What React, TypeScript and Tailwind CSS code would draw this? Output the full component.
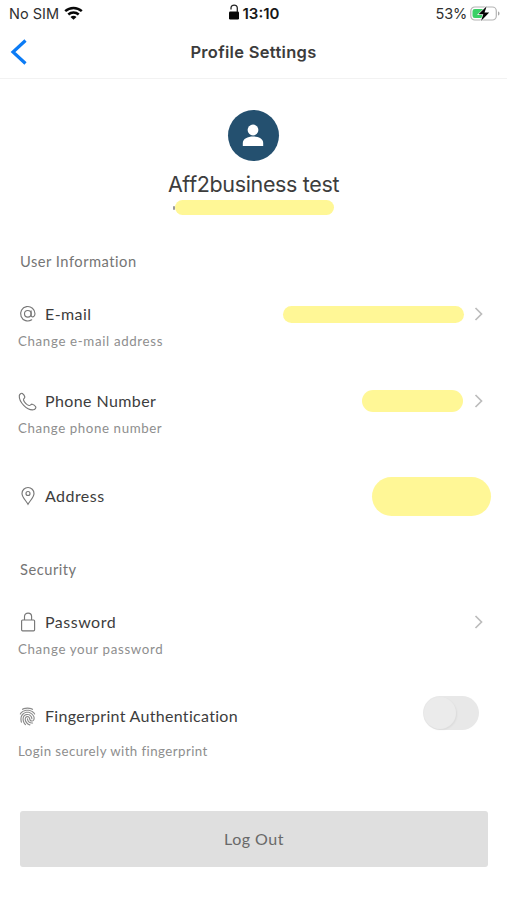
import type { ReactNode } from "react";
import { IoFingerPrint } from "react-icons/io5";

function Wifi() {
  return (
    <svg width="19" height="15" viewBox="0 0 19 15" fill="none" stroke="#080808" strokeWidth="2.5">
      <path d="M1.200 5.200C5.900.9 13.100.9 17.800 5.200" />
      <path d="M4.300 8.500c3-2.700 7.400-2.700 10.400 0" />
      <path d="M9.500 13.800 6.500 10.900c1.700-1.500 4.300-1.500 6 0z" fill="#080808" stroke="none" />
    </svg>
  );
}

function Unlocked() {
  return (
    <svg width="12" height="16" viewBox="0 0 12 16" fill="none">
      <rect x="1" y="7.500" width="10" height="8" rx="1.200" fill="#080808" />
      <path d="M3 5.500V4C3 .2 9.300.2 9.300 4V8" stroke="#222" strokeWidth="1.300" />
    </svg>
  );
}

function Battery() {
  return (
    <svg width="31" height="17" viewBox="0 0 31 17" fill="none">
      <rect x=".8" y="2" width="25.500" height="13" rx="4" stroke="#b4b4b4" strokeWidth="1.200" />
      <path d="M4.800 4H13v9H4.800A2.300 2.300 0 0 1 2.500 10.700V6.300A2.300 2.300 0 0 1 4.800 4z" fill="#39d066" />
      <path d="M28 6.500v4c2-.5 2-3.500 0-4z" fill="#a8a8a8" />
      <path d="M16.700 1.200 8.500 9.300h4.800l-2.300 6.600 8.200-8.500h-4.700z" fill="#050505" stroke="#fff" strokeWidth="1.200" paintOrder="stroke" />
    </svg>
  );
}

function At() {
  return (
    <svg width="18" height="18" viewBox="0 0 18 18" fill="none" stroke="#777" strokeWidth="1.150" strokeLinecap="round">
      <circle cx="8.800" cy="8.800" r="3.300" />
      <path d="M12.100 5.800v4.500c0 2.500 3.900 2.200 3.900-1.500a7.200 7.200 0 1 0-3.300 6" />
    </svg>
  );
}

function Phone() {
  return (
    <svg width="19" height="19" viewBox="0 0 19 19" fill="none" stroke="#777" strokeWidth="1.150" strokeLinejoin="round">
      <path d="M1.300 3.600C1.600 2 3.300.8 4.400 1.400c1.200.8 2.200 2.300 2.400 3.500.2 1.200-1.500 1.800-1.300 3 .4 2 3.500 5.200 5.600 5.600 1.300.2 1.800-1.500 3.100-1.300 1.300.3 2.800 1.400 3.500 2.500.7 1.200-.8 2.800-2.400 3.100C8.900 18.500.8 9.900 1.300 3.600z" />
    </svg>
  );
}

function Pin() {
  return (
    <svg width="18" height="20" viewBox="0 0 18 20" fill="none" stroke="#777" strokeWidth="1.150">
      <path d="M9 18.300C7.300 15 3 11.300 3 7.500a6 6 0 0 1 12 0C15 11.300 10.700 15 9 18.300z" />
      <circle cx="9" cy="7.500" r="2" />
    </svg>
  );
}

function Lock() {
  return (
    <svg width="18" height="20" viewBox="0 0 18 20" fill="none" stroke="#777" strokeWidth="1.150">
      <rect x="2.600" y="8" width="13" height="10.800" rx="1" />
      <path d="M5.500 8V4.600c0-4.700 7.100-4.700 7.100 0V8" />
    </svg>
  );
}

function Chevron() {
  return (
    <svg width="10" height="16" viewBox="0 0 10 16" fill="none" stroke="#bcbcbc" strokeWidth="1.700">
      <path d="m1.500 2 6 6-6 6" />
    </svg>
  );
}

function Row({ icon, label, tracking, children }: { icon: ReactNode; label: string; tracking: string; children?: ReactNode }) {
  return (
    <div className="flex h-10 items-center pl-[18px]">
      <span className="flex w-[19px] justify-center text-[#8a8a8a]">{icon}</span>
      <span className={`ml-2 text-base text-[#3d3d3d] ${tracking}`}>{label}</span>
      <div className="ml-auto flex items-center">{children}</div>
    </div>
  );
}

function Caption({ children, tracking }: { children: string; tracking: string }) {
  return <p className={`pl-[18px] text-[13.300px] leading-5 text-[#8e8e8e] ${tracking}`}>{children}</p>;
}

export default function App() {
  return (
    <div className="h-[900px] w-[507px] overflow-hidden bg-white font-[Lato,sans-serif]">
      <header className="h-[79px] border-b border-[#f2f2f2] font-[Inter,sans-serif]">
        <div className="grid h-7 grid-cols-3 items-center text-[15px] text-[#303030]">
          <div className="flex items-center pl-[9px]">
            <span className="text-[14.500px]">No SIM</span>
            <span className="-mt-[2px] ml-[5px]"><Wifi /></span>
          </div>
          <div className="flex items-center justify-center gap-[3px] font-semibold text-[#181818]">
            <span className="-mt-[5px]"><Unlocked /></span>
            <span className="text-[15px]">13:10</span>
          </div>
          <div className="flex items-center justify-end gap-[3px] pr-[6px]">
            <span className="text-[14.500px] tracking-[-0.200px]">53%</span>
            <span className="-mt-[2px]"><Battery /></span>
          </div>
        </div>
        <div className="-mt-px grid h-[50px] grid-cols-[40px_1fr_40px] items-center">
          <svg className="ml-[10px]" width="18" height="28" viewBox="0 0 18 28" fill="none" stroke="#0b7bf5" strokeWidth="3.200">
            <path d="M15.500 2.500 3 14l12.500 11.500" />
          </svg>
          <h1 className="text-center text-[16.500px] font-semibold tracking-[0.300px] text-[#3c3c3c]">Profile Settings</h1>
        </div>
      </header>

      <section className="flex h-[162px] flex-col items-center pt-[31px]">
        <div className="flex size-[51px] items-center justify-center rounded-full bg-[#24506f]">
          <svg className="-mt-px -ml-px" width="22" height="24" viewBox="0 0 22 24" fill="#fff">
            <circle cx="11" cy="7" r="5.400" />
            <path d="M.8 23v-3c0-4.300 5-6.500 10.200-6.500s10.200 2.200 10.200 6.500v3z" />
          </svg>
        </div>
        <h2 className="mt-[9px] text-[21.500px] leading-[28px] tracking-[-0.350px] text-[#3d3d3d] font-[Inter,sans-serif]">Aff2business test</h2>
        <div className="mt-[2px] flex items-center">
          <span className="h-1 w-[2px] rounded-full bg-[#999]" />
          <span className="h-[15px] w-[159px] rounded-full bg-[#fff796]" />
        </div>
      </section>

      <section className="pt-[10px]">
        <h3 className="pl-[20px] text-[14.700px] leading-5 tracking-[0.500px] text-[#757575]">User Information</h3>
        <div className="mt-[23px]">
          <Row icon={<At />} label="E-mail" tracking="tracking-[0.4px]">
            <span className="mr-[10px] h-[17px] w-[181px] rounded-full bg-[#fff796]" />
            <span className="mr-[23px]"><Chevron /></span>
          </Row>
          <div className="-mt-[3px]"><Caption tracking="tracking-[0.65px]">Change e-mail address</Caption></div>
        </div>
        <div className="mt-[30px]">
          <Row icon={<Phone />} label="Phone Number" tracking="tracking-[0.4px]">
            <span className="mr-[11px] h-[22px] w-[101px] rounded-full bg-[#fff796]" />
            <span className="mr-[23px]"><Chevron /></span>
          </Row>
          <div className="-mt-[3px]"><Caption tracking="tracking-[0.6px]">Change phone number</Caption></div>
        </div>
        <div className="mt-[38px]">
          <Row icon={<Pin />} label="Address" tracking="tracking-[0.45px]">
            <span className="mr-[16px] h-[39px] w-[119px] rounded-full bg-[#fff796]" />
          </Row>
        </div>
      </section>

      <section className="pt-[43px]">
        <h3 className="pl-[20px] text-[14.700px] leading-5 tracking-[0.5px] text-[#757575]">Security</h3>
        <div className="mt-[23px]">
          <Row icon={<Lock />} label="Password" tracking="tracking-[0.5px]">
            <span className="mr-[23px]"><Chevron /></span>
          </Row>
          <div className="-mt-[3px]"><Caption tracking="tracking-[0.65px]">Change your password</Caption></div>
        </div>
        <div className="mt-[37px]">
          <Row icon={<IoFingerPrint size={19} />} label="Fingerprint Authentication" tracking="tracking-[0.3px]">
            <button aria-label="Fingerprint Authentication" className="mr-[28px] -mt-[6px] flex h-[34px] w-14 items-center rounded-full bg-[#e8e8e8]">
              <span className="ml-px size-8 rounded-full bg-[#ebebeb] shadow-[1px_1px_2px_rgba(0,0,0,0.06)]" />
            </button>
          </Row>
          <div className="mt-[5px]"><Caption tracking="tracking-[0.43px]">Login securely with fingerprint</Caption></div>
        </div>
      </section>

      <button className="mt-[50px] ml-[20px] flex h-[56px] w-[468px] items-center justify-center rounded-[3px] bg-[#dfdfdf] text-base tracking-[0.5px] text-[#696969]">
        Log Out
      </button>
    </div>
  );
}
